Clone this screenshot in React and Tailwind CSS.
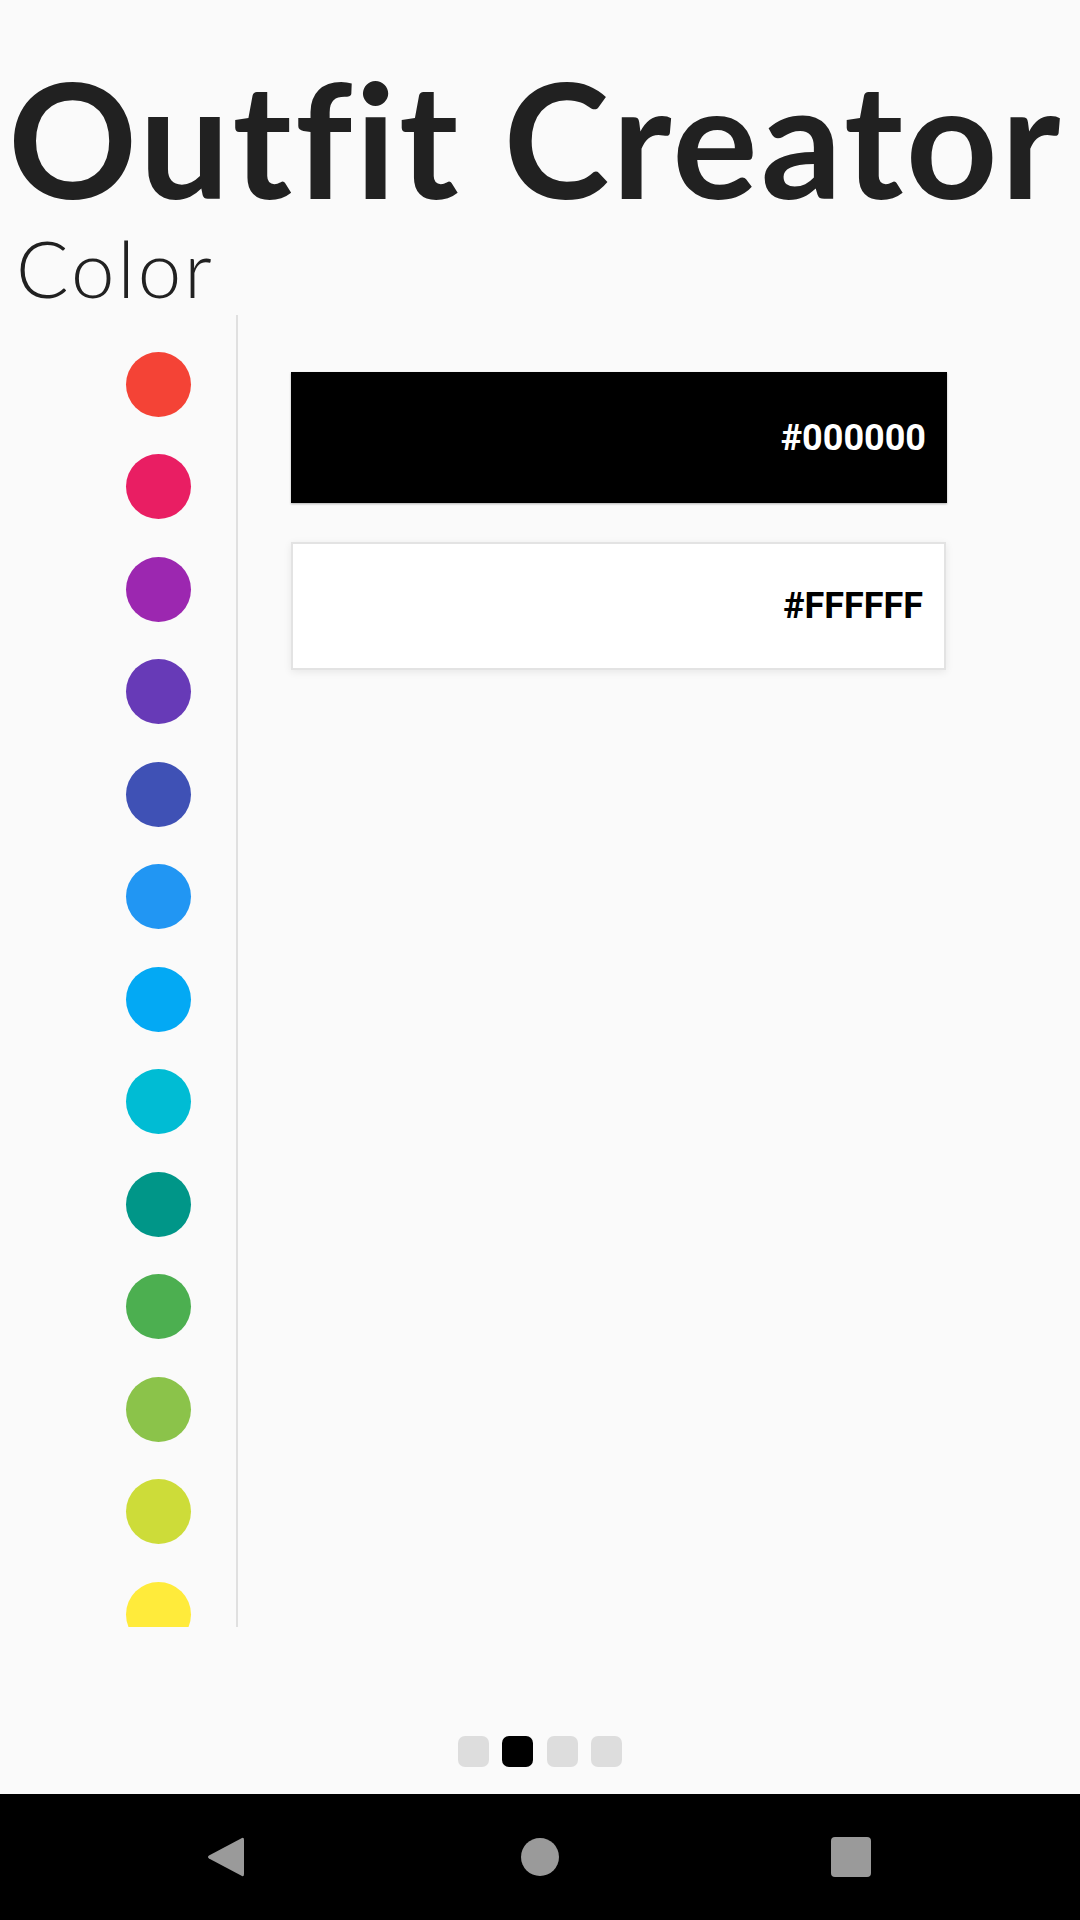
import React from "react";

const colors = [
  "#F44336", "#E91E63", "#9C27B0", "#673AB7", "#3F51B5", "#2196F3", "#03A9F4",
  "#00BCD4", "#009688", "#4CAF50", "#8BC34A", "#CDDC39", "#FFEB3B", "#FFC107",
  "#FF9800", "#FF5722",
];

export default function App() {
  return (
    <div className="w-[1080px] h-[1920px] bg-[#fafafa] flex flex-col overflow-hidden">
      <div
        className="pt-[57px] pl-[8px] h-[217px] text-[160px] leading-[160px] font-bold text-[#212121] whitespace-nowrap tracking-[3px]"
        style={{ fontFamily: "Lato, sans-serif" }}
      >
        Outfit Creator
      </div>
      <div
        className="mt-[12px] pl-[16px] h-[78px] text-[78px] leading-[78px] font-light text-[#212121] tracking-[3px]"
        style={{ fontFamily: "Lato, sans-serif" }}
      >
        Color
      </div>
      <div className="mt-[8px] flex h-[1312px]">
        <div className="w-[236px] h-full overflow-hidden pt-[17.75px]">
          {colors.map((c) => (
            <div key={c} className="h-[102.5px] flex items-center pl-[126px]">
              <div className="w-[65px] h-[65px] rounded-full" style={{ backgroundColor: c }} />
            </div>
          ))}
        </div>
        <div className="w-[2px] h-full bg-[#e0e0e0]" />
        <div className="flex flex-col pl-[53px] pt-[57px]">
          <div
            className="w-[656px] h-[131px] bg-black flex items-center justify-end pr-[21px] text-white text-[36px] font-bold shadow-[0_1px_2px_rgba(0,0,0,0.3)]"
            style={{ fontFamily: "Roboto, sans-serif" }}
          >
            #000000
          </div>
          <div
            className="mt-[39px] w-[655px] h-[128px] bg-white border-2 border-[#e3e3e3] flex items-center justify-end pr-[21px] text-black text-[36px] font-bold shadow-[0_2px_8px_rgba(0,0,0,0.08)]"
            style={{ fontFamily: "Roboto, sans-serif" }}
          >
            #FFFFFF
          </div>
        </div>
      </div>
      <div className="mt-[109px] flex justify-center gap-[13.5px]">
        <div className="w-[31px] h-[31px] rounded-[7px] bg-[#dddddd]" />
        <div className="w-[31px] h-[31px] rounded-[7px] bg-black" />
        <div className="w-[31px] h-[31px] rounded-[7px] bg-[#dddddd]" />
        <div className="w-[31px] h-[31px] rounded-[7px] bg-[#dddddd]" />
      </div>
      <div className="mt-auto h-[126px] bg-black flex items-center">
        <svg className="ml-[207px]" width="37" height="42" viewBox="0 0 37 42">
          <path d="M35 2 Q37 1 37 4 L37 38 Q37 41 35 40 L2 22.5 Q0 21 2 19.5 Z" fill="#9a9a9a" />
        </svg>
        <div className="ml-[277px] w-[38px] h-[38px] rounded-full bg-[#9a9a9a]" />
        <div className="ml-[272px] w-[40px] h-[40px] rounded-[4px] bg-[#9a9a9a]" />
      </div>
    </div>
  );
}
